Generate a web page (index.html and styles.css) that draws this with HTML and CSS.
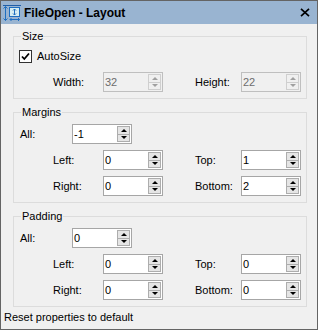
FILE: index.html
```html
<!DOCTYPE html>
<html>
<head>
<meta charset="utf-8">
<link rel="stylesheet" href="styles.css">
</head>
<body>
<div class="window">
  <div class="titlebar">
    <svg class="app-icon" width="18" height="17" viewBox="0 0 18 17">
      <path d="M0 0.5H18" stroke="#1f5fa8" stroke-width="1"/>
      <path d="M2.5 1.5V15.5M0.5 3.5L2.5 1.5L4.5 3.5M0.5 13.5L2.5 15.5L4.5 13.5" stroke="#1f6fc0" fill="none" stroke-width="1"/>
      <rect x="6.5" y="2.5" width="10" height="9" fill="#d6eef2" stroke="#1f6fc0"/>
      <path d="M11.5 4V10M10 5.5L11.5 4L13 5.5M10 8.5L11.5 10L13 8.5" stroke="#1f6fc0" fill="none"/>
      <path d="M7 14.5H16.5M8.5 13L7 14.5L8.5 16M15 13L16.5 14.5L15 16" stroke="#1f6fc0" fill="none"/>
    </svg>
    <span class="title">FileOpen - Layout</span>
    <svg class="close" width="10" height="9" viewBox="0 0 10 9">
      <path d="M1 0.8L9 8.2M9 0.8L1 8.2" stroke="#000" stroke-width="1.7"/>
    </svg>
  </div>
  <div class="content">
    <div class="group group-size">
      <div class="legend">Size</div>
      <div class="check-row">
        <span class="checkbox">
          <svg width="11" height="11" viewBox="0 0 11 11"><path d="M2 5.5L4.3 8L9 2.5" stroke="#000" stroke-width="1.8" fill="none"/></svg>
        </span>
        <span class="lbl-text">AutoSize</span>
      </div>
      <div class="row row-pair row-first-size">
        <span class="lbl lbl-l disabled-lbl">Width:</span>
        <div class="spin disabled"><span class="val">32</span><span class="btns"><span class="btn"><i class="up"></i></span><span class="btn"><i class="down"></i></span></span></div>
        <span class="lbl lbl-r">Height:</span>
        <div class="spin disabled"><span class="val">22</span><span class="btns"><span class="btn"><i class="up"></i></span><span class="btn"><i class="down"></i></span></span></div>
      </div>
    </div>

    <div class="group">
      <div class="legend">Margins</div>
      <div class="row row-all">
        <span class="lbl">All:</span>
        <div class="spin"><span class="val">-1</span><span class="btns"><span class="btn"><i class="up"></i></span><span class="btn"><i class="down"></i></span></span></div>
      </div>
      <div class="row row-pair">
        <span class="lbl lbl-l">Left:</span>
        <div class="spin"><span class="val">0</span><span class="btns"><span class="btn"><i class="up"></i></span><span class="btn"><i class="down"></i></span></span></div>
        <span class="lbl lbl-r">Top:</span>
        <div class="spin"><span class="val">1</span><span class="btns"><span class="btn"><i class="up"></i></span><span class="btn"><i class="down"></i></span></span></div>
      </div>
      <div class="row row-pair">
        <span class="lbl lbl-l">Right:</span>
        <div class="spin"><span class="val">0</span><span class="btns"><span class="btn"><i class="up"></i></span><span class="btn"><i class="down"></i></span></span></div>
        <span class="lbl lbl-r">Bottom:</span>
        <div class="spin"><span class="val">2</span><span class="btns"><span class="btn"><i class="up"></i></span><span class="btn"><i class="down"></i></span></span></div>
      </div>
    </div>

    <div class="group">
      <div class="legend">Padding</div>
      <div class="row row-all">
        <span class="lbl">All:</span>
        <div class="spin"><span class="val">0</span><span class="btns"><span class="btn"><i class="up"></i></span><span class="btn"><i class="down"></i></span></span></div>
      </div>
      <div class="row row-pair">
        <span class="lbl lbl-l">Left:</span>
        <div class="spin"><span class="val">0</span><span class="btns"><span class="btn"><i class="up"></i></span><span class="btn"><i class="down"></i></span></span></div>
        <span class="lbl lbl-r">Top:</span>
        <div class="spin"><span class="val">0</span><span class="btns"><span class="btn"><i class="up"></i></span><span class="btn"><i class="down"></i></span></span></div>
      </div>
      <div class="row row-pair">
        <span class="lbl lbl-l">Right:</span>
        <div class="spin"><span class="val">0</span><span class="btns"><span class="btn"><i class="up"></i></span><span class="btn"><i class="down"></i></span></span></div>
        <span class="lbl lbl-r">Bottom:</span>
        <div class="spin"><span class="val">0</span><span class="btns"><span class="btn"><i class="up"></i></span><span class="btn"><i class="down"></i></span></span></div>
      </div>
    </div>

    <div class="status">Reset properties to default</div>
  </div>
</div>
</body>
</html>
```

FILE: styles.css
```css
* { box-sizing: border-box; }
html, body { margin: 0; padding: 0; background: #f0f0f0; }
body {
  font-family: "Liberation Sans", Arial, sans-serif;
  font-size: 11px;
  color: #000;
}
.window {
  width: 318px;
  height: 330px;
  border: 1px solid #646464;
  background: #f0f0f0;
  display: flex;
  flex-direction: column;
}
.titlebar {
  height: 23px;
  background: #99b4d1;
  display: flex;
  align-items: center;
  flex-shrink: 0;
}
.app-icon {
  margin-left: 2px;
  margin-top: 2px;
  flex-shrink: 0;
}
.title {
  margin-left: 3px;
  font-weight: bold;
  font-size: 12px;
  line-height: 14px;
  flex: 1;
}
.close {
  margin-right: 7px;
  margin-top: 0px;
}
.content {
  display: flex;
  flex-direction: column;
  padding-left: 12px;
}
.group {
  width: 294px;
  border: 1px solid #dcdcdc;
  margin-top: 13px;
  padding-bottom: 6px;
  display: flex;
  flex-direction: column;
}
.group-size {
  margin-top: 12px;
}
.legend {
  align-self: flex-start;
  margin-top: -7px;
  margin-left: 7px;
  padding: 0 1px;
  height: 13px;
  line-height: 13px;
  background: #f0f0f0;
}
.check-row {
  display: flex;
  align-items: center;
  margin-top: 7px;
  padding-left: 5px;
  height: 13px;
}
.checkbox {
  width: 13px;
  height: 13px;
  border: 1px solid #333;
  background: #fff;
  display: flex;
  align-items: center;
  justify-content: center;
}
.lbl-text {
  margin-left: 5px;
  line-height: 13px;
}
.row {
  display: flex;
  align-items: center;
  height: 20px;
  margin-top: 6px;
}
.group .legend + .row { margin-top: 5px; }
.row-first-size { margin-top: 9px; }
.row-all { padding-left: 6px; }
.row-all .lbl { width: 52px; }
.row-pair { padding-left: 39px; }
.lbl { line-height: 13px; }
.lbl-l { width: 50px; }
.lbl-r { width: 46px; margin-left: 32px; }
.spin {
  width: 60px;
  height: 20px;
  border: 1px solid #a6a6a6;
  background: #fff;
  display: flex;
  align-items: stretch;
}
.val {
  flex: 1;
  padding-left: 1px;
  line-height: 18px;
}
.btns {
  width: 13px;
  margin: 1px 1px 1px 0;
  display: flex;
  flex-direction: column;
}
.btn {
  flex: 1;
  background: #e5e5e5;
  border: 1px solid #adadad;
  display: flex;
  align-items: center;
  justify-content: center;
}
.btn + .btn { border-top: none; }
.up, .down {
  width: 0;
  height: 0;
  border-left: 3px solid transparent;
  border-right: 3px solid transparent;
}
.up { border-bottom: 3px solid #000; }
.down { border-top: 3px solid #000; }
.spin.disabled {
  background: #f0f0f0;
  border-color: #bfbfbf;
  color: #6d6d6d;
}
.spin.disabled .btn {
  background: #f0f0f0;
  border-color: #cfcfcf;
}
.spin.disabled .up { border-bottom-color: #a0a0a0; }
.spin.disabled .down { border-top-color: #a0a0a0; }
.status {
  margin-left: -9px;
  margin-top: 4px;
  line-height: 13px;
}
```
